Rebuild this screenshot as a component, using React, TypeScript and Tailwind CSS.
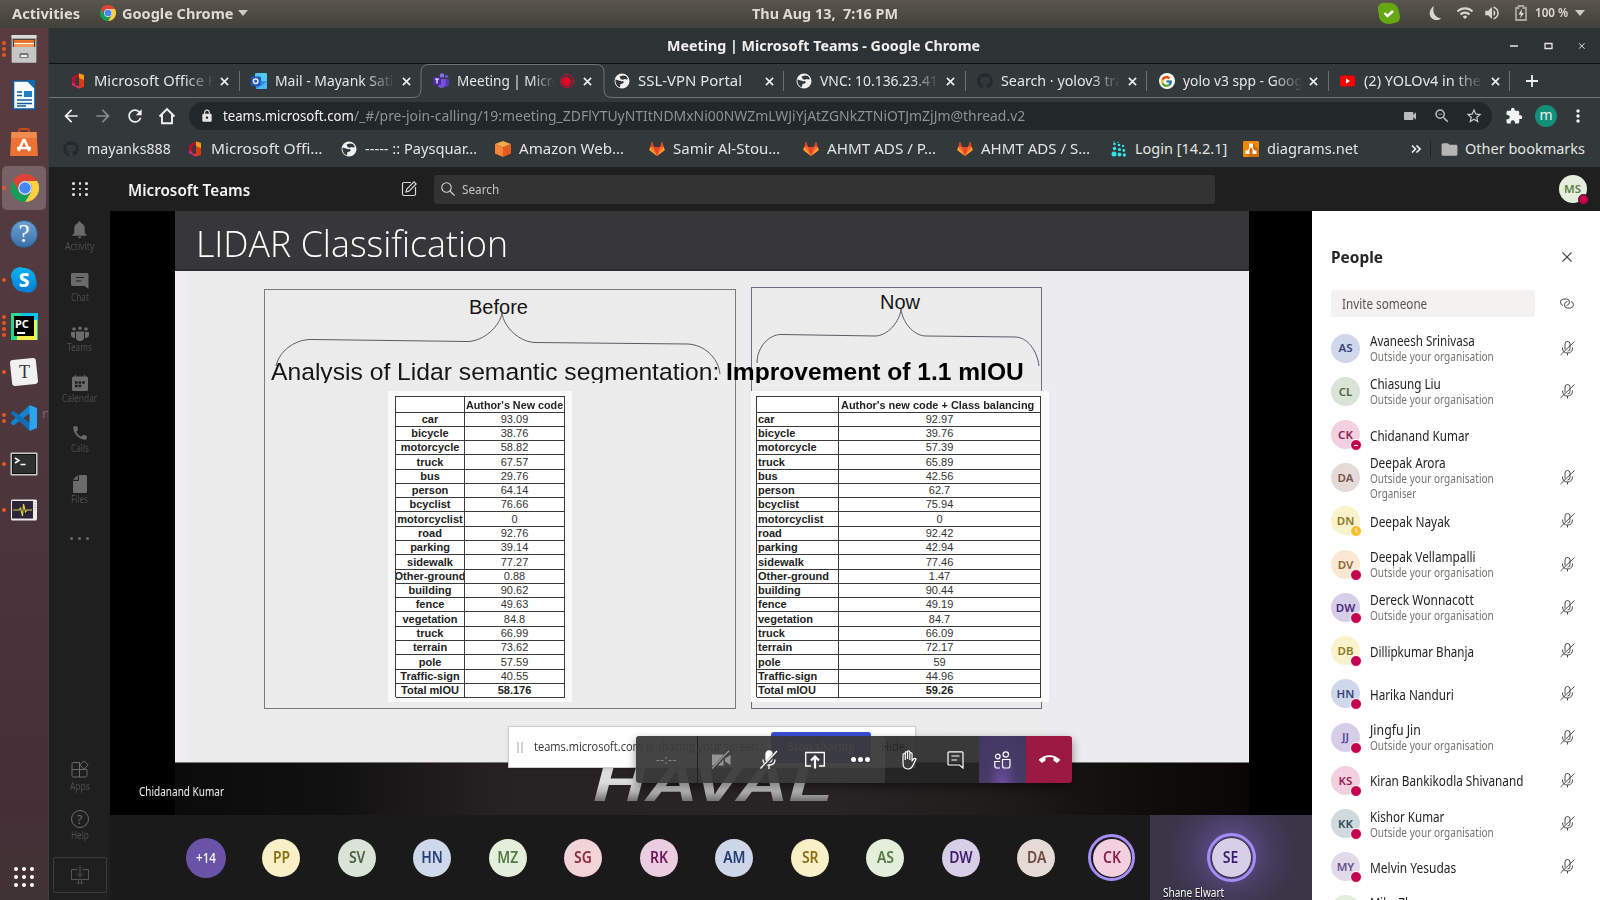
import { useLayoutEffect, useRef, useState } from "react";
import type { ReactNode } from "react";
import { FaGithub } from "react-icons/fa";
import { FcGoogle } from "react-icons/fc";
import {
  MdVideocam, MdExtension, MdMoreVert, MdFolder, MdNotifications, MdCall, MdLock, MdRefresh,
  MdArrowBack, MdArrowForward, MdZoomOut, MdStarBorder, MdWifi, MdVolumeUp, MdCallEnd,
} from "react-icons/md";

/* Text condensed or widened to an exact advance width. */
function Fit({ w, className = "", children }: { w: number; className?: string; children: ReactNode }) {
  const ref = useRef<HTMLSpanElement>(null);
  const [s, setS] = useState(1);
  useLayoutEffect(() => {
    if (ref.current && ref.current.offsetWidth) setS(w / ref.current.offsetWidth);
  }, [w]);
  return (
    <span className="block shrink-0 whitespace-nowrap" style={{ width: w }}>
      <span ref={ref} className={"inline-block origin-left align-top " + className} style={{ transform: `scaleX(${s})` }}>
        {children}
      </span>
    </span>
  );
}

/* ---------- logos ---------- */
const Chrome = ({ className }: { className: string }) => (
  <svg viewBox="0 0 24 24" className={className}>
    <path d="M1.6 6A12 12 0 0 1 22.4 6H12A6 6 0 0 0 6.8 15Z" fill="#dd4436" />
    <path d="M22.4 6A12 12 0 0 1 12 24L17.2 15A6 6 0 0 0 12 6Z" fill="#fdd03f" />
    <path d="M12 24A12 12 0 0 1 1.6 6L6.8 15A6 6 0 0 0 17.2 15Z" fill="#149e58" />
    <circle cx="12" cy="12" r="5.9" fill="#e9edf5" />
    <circle cx="12" cy="12" r="4.9" fill="#4487f4" />
  </svg>
);
const Office = () => (
  <svg viewBox="0 0 16 16" className="size-4 shrink-0">
    <path d="M2 4 9 .5V4L5.5 5v6L3 12.5 2 12Z" fill="#b5122c" />
    <path d="M9 .5 14 2v12l-5 1.5L3.5 12.5 9 13Z" fill="#d93a12" />
    <path d="M9 .5 14 2v5L9 5Z" fill="#f19a1c" />
    <path d="M2 10v2l7 3.500V13l-4.500-.5L5.500 11Z" fill="#e8257f" />
  </svg>
);
const Outlook = () => (
  <svg viewBox="0 0 16 16" className="size-4 shrink-0">
    <rect x="4" y="0" width="12" height="9" rx="1" fill="#50c8f5" />
    <rect x="4" y="4" width="6" height="6" fill="#1066b5" />
    <path d="M4 7.500l12 1V15a1 1 0 0 1-1 1H5Z" fill="#2a8ae0" />
    <path d="M16 8.500 5 16h10a1 1 0 0 0 1-1Z" fill="#4fb5ee" />
    <rect x="0" y="3.500" width="9.500" height="9.500" rx="1" fill="#2157b8" />
    <circle cx="4.700" cy="8.200" r="2.300" fill="none" stroke="#fff" strokeWidth="1.300" />
  </svg>
);
const TeamsLogo = () => (
  <svg viewBox="0 0 16 16" className="size-4 shrink-0">
    <circle cx="13.500" cy="3.500" r="1.700" fill="#5059c9" />
    <circle cx="9" cy="2.500" r="2.300" fill="#8b6be8" />
    <path d="M11 6h5v5a3 3 0 0 1-5 2Z" fill="#5b3bb5" />
    <path d="M5 6h7.500v5.500a4 4 0 0 1-7.500 1.500Z" fill="#7b50d8" />
    <rect x="0" y="4" width="8" height="8" rx=".8" fill="#4b2ba8" />
    <path d="M2 6h4M4 6v4.500" stroke="#fff" strokeWidth="1.200" />
  </svg>
);
const Globe = () => (
  <svg viewBox="0 0 16 16" className="size-4 shrink-0">
    <circle cx="8" cy="8" r="7.500" fill="#f1f1ef" />
    <path d="M1.500 6.500 5 7.500c1.500.4 2 1 3.500.5l1.500 1-1.200 1.500-2.300.5-.6 3.300C3 13.500 1 10 1.500 6.500Z" fill="#33383b" />
    <path d="M5.500 3.500 9 2.500l3 .5 2 3-1.500.5-2-.5-1.500.8-2.200-.6Z" fill="#33383b" />
  </svg>
);
const Github = () => <FaGithub className="size-4 shrink-0 text-[#24292e]" />;
const GoogleG = () => (
  <span className="flex size-4 shrink-0 items-center justify-center rounded-full bg-white"><FcGoogle className="size-[13px]" /></span>
);
const YouTube = () => (
  <svg viewBox="0 0 16 16" className="size-4 shrink-0"><rect x="0" y="2.500" width="15" height="11" rx="2.500" fill="#f00" /><path d="M6 5.500v5L10 8Z" fill="#fff" /></svg>
);
const Fox = () => (
  <svg viewBox="0 0 16 16" className="size-4 shrink-0">
    <path d="M3 .8 5 6h6l2-5.200L15.700 9 8 15 .3 9Z" fill="#fc6d26" />
    <path d="M3 .8 5 6H1.300ZM13 .8 11 6h3.700ZM5 6h6l-3 9Z" fill="#e2432a" />
    <path d="M1.300 6 .3 9 8 15ZM14.700 6l1 3L8 15Z" fill="#fca326" />
  </svg>
);
const Cube = () => (
  <svg viewBox="0 0 16 16" className="size-4 shrink-0">
    <path d="M8 0 16 3 8 6.500 0 3Z" fill="#f9a64a" /><path d="M0 3 8 6.500V16L0 12.500Z" fill="#f58536" /><path d="M16 3 8 6.500V16l8-3.500Z" fill="#e8591f" />
  </svg>
);
const DotsLogo = () => (
  <svg viewBox="0 0 16 16" className="size-4 shrink-0" fill="#2ee6ea">
    <circle cx="3" cy="13" r="2.500" /><circle cx="8.500" cy="13.500" r="1.900" /><circle cx="13.300" cy="14" r="1.700" />
    <circle cx="3.500" cy="7.500" r="1.700" /><circle cx="8.500" cy="8.500" r="1.600" /><circle cx="12.800" cy="9.500" r="1.400" />
    <circle cx="3.500" cy="3" r="1.300" /><circle cx="8" cy="4" r="1.300" /><circle cx="12" cy="5" r="1.200" /><circle cx="3" cy=".9" r=".7" /><circle cx="7" cy="1.200" r=".7" />
  </svg>
);
const Diagrams = () => (
  <svg viewBox="0 0 16 16" className="size-4 shrink-0">
    <rect width="16" height="16" rx="1" fill="#f08705" /><path d="M10 2.500 16 9v7H7l-4.500-3Z" fill="#cf6d06" />
    <path d="M8 5 4.500 11M8 5l3.500 6" stroke="#fff" strokeWidth="1.200" /><path d="M6 2.500h4V6H6ZM2.500 9.500h4V13h-4ZM9.500 9.500h4V13h-4Z" fill="#fff" />
  </svg>
);
const CloseX = () => (
  <svg viewBox="0 0 10 10" className="size-[9px]"><path d="M1 1l8 8M9 1 1 9" stroke="#eceff0" strokeWidth="1.800" /></svg>
);

/* ---------- desktop top bar ---------- */
function TopBar() {
  return (
    <div className="flex h-7 shrink-0 items-center bg-gradient-to-b from-[#5a564d] to-[#42403a] pb-0.5 pl-3 text-[14px] font-bold text-[#dfdbd2]">
      <Fit w={68}>Activities</Fit>
      <Chrome className="ml-5 size-4" />
      <div className="ml-[6px]"><Fit w={111}>Google Chrome</Fit></div>
      <svg viewBox="0 0 10 6" className="ml-[5px] h-[6px] w-[10px]"><path d="M0 0h10L5 6Z" fill="#cfccc4" /></svg>
      <div className="ml-[504px]"><Fit w={146}>Thu Aug 13,&nbsp; 7:16 PM</Fit></div>
      <svg viewBox="0 0 22 22" className="ml-[480px] size-[22px]">
        <path d="M0 7C0 1 5 0 9 1c7-1 12 4 12 9 2 6 1 11-5 11C8 24 0 20 1 12 0 10 0 9 0 7Z" fill="#65a812" />
        <path d="M6.500 11l3 3 5.500-5" fill="none" stroke="#fff" strokeWidth="2.400" />
      </svg>
      <svg viewBox="0 0 14 14" className="ml-[29px] size-[14px]"><path d="M5 0C-1 4-1 12 6 14c3 .5 5-.5 6-2C6 12 3 6 5 0Z" fill="#d8d5cd" /></svg>
      <MdWifi className="ml-[13px] size-[18px] text-[#d8d5cd]" />
      <MdVolumeUp className="ml-[9px] size-[18px] text-[#d8d5cd]" />
      <svg viewBox="0 0 12 16" className="ml-[14px] h-4 w-3"><path d="M1 3h2.500V1h5v2H11v12H1Z" fill="none" stroke="#a9a69e" strokeWidth="1.800" /><path d="M7 4 3.500 9.500H6L5 13.500 9 8H6.500Z" fill="#e5e2da" /></svg>
      <div className="ml-2"><Fit w={33} className="text-[13px] font-semibold">100 %</Fit></div>
      <svg viewBox="0 0 10 6" className="ml-[7px] h-[6px] w-[10px]"><path d="M0 0h10L5 6Z" fill="#cfccc4" /></svg>
    </div>
  );
}

/* ---------- launcher ---------- */
const launcher: { dots: number; y: string; icon: ReactNode }[] = [
  { dots: 3, y: "h-[46px]", icon: (
    <svg viewBox="0 0 28 28" className="size-7"><rect x="1.500" y="0" width="25" height="28" rx="1.500" fill="#a8a8a8" /><rect x="1.500" y="0" width="25" height="3" fill="#d9d9d9" /><rect x="3" y="4" width="22" height="8" fill="#4a4238" /><rect x="4" y="5" width="20" height="3" fill="#e8742e" /><rect x="4" y="8" width="20" height="1" fill="#fff" /><rect x="4" y="9" width="20" height="3" fill="#ef9a55" /><rect x="2" y="12" width="24" height="15" fill="#c6c6c6" /><rect x="9.500" y="18" width="9" height="5" rx="1" fill="#777" /><rect x="11" y="20" width="6" height="2" fill="#eee" /></svg>) },
  { dots: 0, y: "h-[46px]", icon: (
    <svg viewBox="0 0 28 30" className="h-[30px] w-7"><path d="M3.500 1H18l7 7v21H3.500Z" fill="#fafafa" stroke="#0b5a9c" strokeWidth="1.600" /><path d="M17 0h8v9Z" fill="#0d6ab5" /><path d="M7 12h5M7 15.500h5M7 20h15M7 23.500h15M7 26h9" stroke="#0d5f9f" strokeWidth="1.600" /><rect x="14" y="11" width="8" height="6" fill="#1d7fc4" /></svg>) },
  { dots: 0, y: "h-[48px]", icon: (
    <svg viewBox="0 0 28 28" className="size-7"><path d="M9 5V3q0-2 2-2h6q2 0 2 2v2" fill="none" stroke="#c9491c" strokeWidth="2" /><path d="M1.500 4h25L28 28H0Z" fill="#ec7134" /><path d="M1.500 4h25l.3 6H1.200Z" fill="#f08a50" /><path d="M14 11l5.500 12M14 11 8.500 23M7 20h14" stroke="#fff" strokeWidth="2.600" /></svg>) },
  { dots: 1, y: "h-[44px]", icon: <Chrome className="size-7" /> },
  { dots: 0, y: "h-[47px]", icon: (
    <div className="flex size-7 items-center justify-center rounded-full border border-[#2d5a8c] bg-gradient-to-b from-[#6f9fd0] to-[#3a70ab] font-['Liberation_Serif',serif] text-[25px] leading-none text-white">?</div>) },
  { dots: 1, y: "h-[46px]", icon: (
    <div className="relative size-[26px]">
      <span className="absolute left-0 top-0 size-[18px] rounded-full bg-[#08a9ec]" />
      <span className="absolute bottom-0 right-0 size-[18px] rounded-full bg-[#0b7cd4]" />
      <div className="absolute inset-px flex items-center justify-center rounded-full bg-gradient-to-b from-[#08b4f2] to-[#0b7cd4] text-[19px] font-extrabold leading-none text-white">S</div>
    </div>) },
  { dots: 4, y: "h-[46px]", icon: (
    <div className="flex size-[27px] items-center justify-center bg-[linear-gradient(60deg,#21d789_20%,#35dca0_55%,#0ac4ee_60%,#0ac4ee_100%)]"><div className="flex h-5 w-5 flex-col bg-black pl-px pt-px text-[11px] font-bold leading-[13px] text-white shadow-[3px_4px_0_#f4ee4a]">PC<span className="ml-0.5 mt-0.5 h-[1.500px] w-[8px] bg-white" /></div></div>) },
  { dots: 1, y: "h-[46px]", icon: (
    <div className="flex size-[26px] -rotate-6 items-center justify-center rounded-[3px] bg-[#f1f1f1]"><span className="rotate-6 font-['Liberation_Serif',serif] text-[18px] leading-none text-[#333]">T</span></div>) },
  { dots: 2, y: "h-[46px]", icon: (
    <svg viewBox="0 0 28 28" className="size-7"><path d="M20 1 2 17l-1.500 2 3 2.500L20 9Z" fill="#1484cf" /><path d="M3.500 7 .5 9 20 27V19Z" fill="#0f70b8" /><path d="M19.500 1 27 4v20l-7.500 3Z" fill="#2ba3ee" /></svg>) },
  { dots: 1, y: "h-[46px]", icon: (
    <svg viewBox="0 0 28 24" className="h-6 w-7"><rect x=".5" y=".5" width="27" height="23" rx="1" fill="#c9c9c6" /><rect x="2.500" y="2.500" width="23" height="19" fill="#2c302f" stroke="#111" /><path d="M5 6l4 2.500L5 11M10.500 12.500h5" fill="none" stroke="#fff" strokeWidth="1.500" /></svg>) },
  { dots: 1, y: "h-[46px]", icon: (
    <svg viewBox="0 0 28 22" className="h-[22px] w-7"><rect x="1" y=".5" width="26" height="21" rx="1.500" fill="#ecebe8" /><rect x="2" y="2" width="21" height="17.500" fill="#2a2539" /><path d="M3 11h6l1.500-2 2 8L13.500 5l2 8 1.500-2h5" fill="none" stroke="#d9cf4a" strokeWidth="1.100" /><path d="M25 3v8" stroke="#888" strokeDasharray="1 1.500" /></svg>) },
];
function Launcher() {
  return (
    <div className="flex w-[49px] shrink-0 flex-col border-r border-[#3a3f38] bg-[linear-gradient(#5a3c3f,#50393e_35%,#49343b_65%,#452f37_90%,#403334)] pr-0.5">
      {launcher.map((l, i) => (
        <div key={i} className={"relative flex shrink-0 items-center justify-center " + l.y + (i === 0 ? " -mt-0.5" : "") + (i === 3 ? " ml-0.5 rounded-[5px] bg-white/20" : "")}>
          <div className={"absolute flex flex-col gap-[2px] " + (i === 3 ? "left-0" : "left-0.5")}>
            {Array.from({ length: l.dots }, (_, k) => <span key={k} className="size-1 rounded-full bg-[#e95420]" />)}
          </div>
          <div className="pl-0.5">{l.icon}</div>
          {i === 8 && <span className="absolute -right-0.5 top-2.5 w-1.5 overflow-hidden text-[13px] leading-4 text-[#77696c]">n</span>}
        </div>
      ))}
      <div className="mt-auto grid grid-cols-[repeat(3,4px)] gap-[4px] pb-[13px] pl-[14px]">
        {Array.from({ length: 9 }, (_, k) => <span key={k} className="size-1 rounded-full bg-white" />)}
      </div>
    </div>
  );
}

/* ---------- browser ---------- */
const tabs: { icon: ReactNode; t: string; w: number; fade?: boolean; rec?: boolean; sep?: boolean }[] = [
  { icon: <Office />, t: "Microsoft Office H", w: 125, fade: true, sep: true },
  { icon: <Outlook />, t: "Mail - Mayank Sati", w: 118, fade: true },
  { icon: <TeamsLogo />, t: "Meeting | Micro", w: 103, fade: true, rec: true },
  { icon: <Globe />, t: "SSL-VPN Portal", w: 104, sep: true },
  { icon: <Globe />, t: "VNC: 10.136.23.41", w: 118, fade: true, sep: true },
  { icon: <Github />, t: "Search · yolov3 tra", w: 122, fade: true, sep: true },
  { icon: <GoogleG />, t: "yolo v3 spp - Goog", w: 120, fade: true, sep: true },
  { icon: <YouTube />, t: "(2) YOLOv4 in the", w: 117, fade: true, sep: true },
];
function Tabs() {
  return (
    <div className="relative flex h-[34px] shrink-0 bg-[#33383b] pl-[9px]">
      <svg className="absolute inset-0 h-[34px] w-[1551px]" viewBox="0 0 1551 34" fill="none">
        <path d="M0 33.500H364q8 0 8-8V8.500q0-8 8-8H547q8 0 8 8v17q0 8 8 8H1551" stroke="#6d7477" />
      </svg>
      {tabs.map((x, i) => (
        <div key={i} className="relative flex w-[181.500px] items-center pl-[11.500px]">
          {x.icon}
          <div className={"ml-2 overflow-hidden text-[14.500px] text-[#e4e6e6] " + (x.rec ? "w-[97px]" : "w-[118px]") + (x.fade ? " [mask-image:linear-gradient(to_right,#000_76%,transparent_102%)]" : "")}>
            <Fit w={x.w}>{x.t}</Fit>
          </div>
          {x.rec && <span className="ml-[6px] mr-px flex size-[14px] items-center justify-center rounded-full border border-[#e8002a] p-[2px]"><span className="size-[9px] shrink-0 rounded-full bg-[#e8002a]" /></span>}
          <div className="flex w-[26px] justify-center"><CloseX /></div>
          {x.sep && <div className="ml-auto h-5 w-px bg-[#6a7073]" />}
        </div>
      ))}
      <svg viewBox="0 0 12 12" className="ml-[16px] mt-[11px] size-3"><path d="M6 0v12M0 6h12" stroke="#f0f0f0" strokeWidth="1.800" /></svg>
    </div>
  );
}
function AddressBar() {
  return (
    <div className="flex h-9 shrink-0 items-center bg-[#33383b] pl-3 text-[#f2f2f0]">
      <MdArrowBack className="size-5" />
      <MdArrowForward className="ml-3 size-5 text-[#878b8d]" />
      <MdRefresh className="ml-3 size-5" />
      <svg viewBox="0 0 18 18" className="ml-[13px] size-[18px]"><path d="M1.500 9.500 9 2l7.500 7.500M4 8v8.200h10V8" fill="none" stroke="currentColor" strokeWidth="1.900" /></svg>
      <div className="ml-[13px] flex h-7 w-[1303px] items-center rounded-full bg-[#22272a] pl-[11px]">
        <MdLock className="size-[14px] text-[#e4e4e2]" />
        <div className="ml-[9px] text-[14.500px]"><Fit w={131}>teams.microsoft.com</Fit></div>
        <div className="text-[14.500px] text-[#8d9294]"><Fit w={671}>/_#/pre-join-calling/19:meeting_ZDFlYTUyNTItNDMxNi00NWZmLWJiYjAtZGNkZTNiOTJmZjJm@thread.v2</Fit></div>
        <MdVideocam className="ml-auto size-4 text-[#b9bcbd]" />
        <MdZoomOut className="ml-[15px] size-[18px] text-[#b9bcbd]" />
        <MdStarBorder className="ml-[14px] mr-[9px] size-[18px] text-[#c9cccd]" />
      </div>
      <MdExtension className="ml-[13px] size-[18px]" />
      <div className="ml-3 flex size-[22px] items-center justify-center rounded-full bg-[#12907c] pb-0.5 text-[14px] leading-none">m</div>
      <MdMoreVert className="ml-[11px] size-5" />
    </div>
  );
}
const bookmarks: [ReactNode, string, number][] = [
  [<Github />, "mayanks888", 84], [<Office />, "Microsoft Offi…", 112], [<Globe />, "----- :: Paysquar…", 112], [<Cube />, "Amazon Web…", 105],
  [<Fox />, "Samir Al-Stou…", 107], [<Fox />, "AHMT ADS / P…", 109], [<Fox />, "AHMT ADS / S…", 109], [<DotsLogo />, "Login [14.2.1]", 92], [<Diagrams />, "diagrams.net", 91],
];
function Bookmarks() {
  return (
    <div className="flex h-[33px] shrink-0 items-center bg-[#33383b] pb-[3px] text-[#e2e4e4]">
      <div className="grid w-[1359px] grid-cols-[124px_154px_154px_154px_154px_154px_154px_132px_120px] pl-[14px] text-[14.500px]">
        {bookmarks.map(([icon, t, w], i) => (
          <div key={i} className="flex items-center gap-2">{icon}<Fit w={w}>{t}</Fit></div>
        ))}
      </div>
      <svg viewBox="0 0 10 8" className="ml-[3px] h-2 w-[10px]"><path d="M1 .5 4.500 4 1 7.500M5.500 .5 9 4 5.500 7.500" fill="none" stroke="#eee" strokeWidth="1.600" /></svg>
      <div className="ml-[9px] h-4 w-px bg-[#1d2123]" />
      <MdFolder className="ml-[9px] size-[19px] text-[#b5b5b3]" />
      <div className="ml-[6px] text-[14.500px]"><Fit w={120}>Other bookmarks</Fit></div>
    </div>
  );
}

/* ---------- Teams ---------- */
function TeamsHeader() {
  return (
    <div className="flex h-[44px] shrink-0 items-center bg-[#1f1f1f]">
      <div className="ml-[23px] grid grid-cols-3 gap-x-[4px] gap-y-[3px]">
        {Array.from({ length: 9 }, (_, k) => <span key={k} className="size-[2.500px] rounded-full bg-[#e8e8e8]" />)}
      </div>
      <div className="ml-[40px] pt-[3px] text-[15.500px] font-semibold text-[#f3f3f3]"><Fit w={122}>Microsoft Teams</Fit></div>
      <svg viewBox="0 0 16 16" className="ml-[151px] size-4" fill="none" stroke="#d5d5d5" strokeWidth="1.200"><path d="M10 1.500H3A1.500 1.500 0 0 0 1.500 3v10A1.500 1.500 0 0 0 3 14.500h10a1.500 1.500 0 0 0 1.500-1.500V6" /><path d="M5 11l.8-3L13 .9l2.100 2.100L8 10.200Z" /></svg>
      <div className="ml-[17px] flex h-[29px] w-[781px] items-center rounded-[3px] bg-[#333] pl-[7px]">
        <svg viewBox="0 0 14 14" className="size-[14px]" fill="none" stroke="#d5d5d5" strokeWidth="1.100"><circle cx="5.500" cy="5.500" r="4.700" /><path d="M9 9l4.500 4.500" /></svg>
        <div className="ml-[7px] pt-[2px] text-[13px] text-[#c4c4c4]"><Fit w={37}>Search</Fit></div>
      </div>
      <div className="relative ml-[344px] flex size-7 items-center justify-center rounded-full bg-[#e4eedb] text-[11.500px] font-semibold text-[#5c8048]">
        MS<span className="absolute -bottom-0.5 -right-0.5 size-[11px] rounded-full border border-[#1f1f1f] bg-[#c4014e]" />
      </div>
    </div>
  );
}
const rail: [string, number, ReactNode][] = [
  ["Activity", 29, <MdNotifications className="size-[21px]" />],
  ["Chat", 18, <svg viewBox="0 0 18 17" className="mt-1 h-[17px] w-[18px]"><path d="M1 0h15q1.500 0 1.500 1.500V16L13.500 13H1.500Q0 13 0 11.500V1Z" fill="currentColor" /><path d="M5 4.500h8M5 8h5.500" stroke="#1f1f1f" /></svg>],
  ["Teams", 25, <svg viewBox="0 0 18 15" className="mt-1.5 h-[15px] w-[18px]" fill="currentColor"><circle cx="3" cy="3" r="1.800" /><circle cx="9" cy="2.200" r="1.800" /><circle cx="15" cy="3" r="1.800" /><path d="M0 6h4v6q-4 0-4-3ZM14 6h4v3q0 3-4 3ZM5 5.500h8v6q0 3.500-4 3.500t-4-3.500Z" /></svg>],
  ["Calendar", 35, <svg viewBox="0 0 16 16" className="mt-1 size-4"><path d="M2 1.500h1V0h1v1.500h8V0h1v1.500h1.500Q16 1.500 16 3v11.500q0 1.500-1.500 1.500h-13Q0 16 0 14.500V3Q0 1.500 1.500 1.500Z" fill="currentColor" /><path d="M3 7.500h10M3 11h7" stroke="#1f1f1f" strokeWidth="2.600" strokeDasharray="2.600 1" /></svg>],
  ["Calls", 18, <MdCall className="mt-1 size-[18px]" />],
  ["Files", 17, <svg viewBox="0 0 14 18" className="mt-1 h-[18px] w-[14px]" fill="currentColor"><path d="M6 0h6.500Q14 0 14 1.500v15Q14 18 12.500 18h-11Q0 18 0 16.500V6h5q1 0 1-1ZM0 4.800 4.800 0v4.800Z" /></svg>],
];
function Rail() {
  return (
    <div className="flex w-[61px] shrink-0 flex-col items-center bg-[#1f1f1f] pt-[7px] text-[#6b6b6b]">
      {rail.map(([t, w, icon]) => (
        <div key={t} className="flex h-[50.500px] shrink-0 flex-col items-center">
          <div className="flex h-[22px] items-center">{icon}</div>
          <div className="text-[10.500px] leading-[13px] text-[#4d4d4d]"><Fit w={w}>{t}</Fit></div>
        </div>
      ))}
      <div className="mt-[16px] flex gap-[5px]"><span className="size-[3px] rounded-full bg-current" /><span className="size-[3px] rounded-full bg-current" /><span className="size-[3px] rounded-full bg-current" /></div>
      <div className="mt-auto flex h-[50px] flex-col items-center">
        <svg viewBox="0 0 18 18" className="mb-[2px] size-[18px]" fill="none" stroke="currentColor"><path d="M1 9.500h7.500V17H2.500Q1 17 1 15.500ZM8.500 9.500H16v6q0 1.500-1.500 1.500h-6ZM1 9.500V4q0-1.500 1.500-1.500h6v7M13 .8l4.200 4.200L13 9.200 8.800 5Z" /></svg>
        <div className="text-[10.500px] leading-[13px] text-[#4d4d4d]"><Fit w={20}>Apps</Fit></div>
      </div>
      <div className="flex h-[47px] flex-col items-center">
        <div className="mb-px flex size-[18px] items-center justify-center rounded-full border border-current text-[13px] leading-none">?</div>
        <div className="text-[10.500px] leading-[13px] text-[#4d4d4d]"><Fit w={18}>Help</Fit></div>
      </div>
      <div className="mb-[7px] flex h-[36px] w-[54px] items-center justify-center rounded-[2px] border border-[#3c3c3c] text-[#555]">
        <svg viewBox="0 0 18 18" className="size-[18px]" fill="none" stroke="currentColor"><path d="M6.500 3.500H.5v10h17v-10h-6M9 0v10.500M6 7.500l3 3 3-3M7.500 13.500v3M10.500 13.500v3M5.500 17h7" /></svg>
      </div>
    </div>
  );
}

const labels = ["car", "bicycle", "motorcycle", "truck", "bus", "person", "bcyclist", "motorcyclist", "road", "parking", "sidewalk", "Other-ground", "building", "fence", "vegetation", "truck", "terrain", "pole", "Traffic-sign", "Total mIOU"];
const before = ["93.09", "38.76", "58.82", "67.57", "29.76", "64.14", "76.66", "0", "92.76", "39.14", "77.27", "0.88", "90.62", "49.63", "84.8", "66.99", "73.62", "57.59", "40.55", "58.176"];
const now = ["92.97", "39.76", "57.39", "65.89", "42.56", "62.7", "75.94", "0", "92.42", "42.94", "77.46", "1.47", "90.44", "49.19", "84.7", "66.09", "72.17", "59", "44.96", "59.26"];

function ScoreTable({ head, headW, values, cols, labelClass, headClass }: { head: string; headW: number; values: string[]; cols: string; labelClass: string; headClass: string }) {
  return (
    <div className="border-l border-t border-[#3a3a3c] bg-white text-[11px] leading-[13px] text-[#222]">
      {["", ...labels].map((l, i) => (
        <div key={i} className={"grid h-[14.290px] " + cols}>
          <div className={"flex items-center overflow-hidden whitespace-nowrap border-b border-r border-[#3a3a3c] pt-[1.500px] font-bold " + labelClass}>{l}</div>
          <div className={"flex items-center justify-center border-b border-r border-[#3a3a3c] pt-[1.500px] " + (i === 0 ? "font-bold " + headClass : i === 20 ? "font-bold" : "text-[#333]")}>
            {i === 0 ? <Fit w={headW}>{head}</Fit> : values[i - 1]}
          </div>
        </div>
      ))}
    </div>
  );
}

function Slide() {
  return (
    <div className="relative z-10 h-[551px] w-[1074px] bg-[linear-gradient(90deg,#efedf1_0,#efedf1_12px,#ebebeb_13px,#ececec_70%,#ecebf0)] font-['Liberation_Sans',Arial,sans-serif] text-[#161616]">
      <div className="flex h-[60px] items-center border-b-2 border-[#2c2c2e] bg-[#373739] pl-[21px] pt-2 font-['Open_Sans',sans-serif] text-[36px] font-light leading-none text-white">
        <Fit w={312}>LIDAR Classification</Fit>
      </div>
      <div className="absolute left-[89px] top-[78px] h-[420px] w-[472px] border border-[#7c7c80]" />
      <div className="absolute left-[576px] top-[76px] h-[422px] w-[291px] border border-[#706c80]" />
      <div className="absolute left-[294px] top-[81px] text-[20px]"><Fit w={59}>Before</Fit></div>
      <div className="absolute left-[705px] top-[76px] text-[20px]"><Fit w={40}>Now</Fit></div>
      <svg viewBox="175 211 1074 551" className="absolute inset-0 h-[551px] w-[1074px]" fill="none" stroke="#5c5a66" strokeWidth="1">
        <path d="M276 366C280 349 297 339 312 339.500L468 341.500C484 341 500 326 502 313C504 328 520 342 535 342.500L688 344C704 345 718 357 720 374" />
        <path d="M757 363C757 347 769 334.500 781 334.500L875 336C888 336 900 321 901 309C902 321 913 336 926 336L1015 337C1027 337 1037 350 1039 366" />
      </svg>
      <div className="absolute left-[96px] top-[145px] flex h-[27px] overflow-hidden text-[24.500px] leading-[31px]">
        <Fit w={448}>Analysis of Lidar semantic segmentation:</Fit>
        <div className="ml-[7px] font-bold text-black"><Fit w={298}>Improvement of 1.1 mIOU</Fit></div>
      </div>
      <div className="absolute left-[213px] top-[180px] bg-[#fafafa] px-[7px] py-[5px]">
        <ScoreTable head="Author's New code" headW={97} values={before} cols="grid-cols-[69px_100px]" labelClass="justify-center" headClass="" />
      </div>
      <div className="absolute left-[576px] top-[180px] bg-[#fafafa] py-[5px] pl-[5px] pr-2">
        <ScoreTable head="Author's new code + Class balancing" headW={193} values={now} cols="grid-cols-[82px_202px]" labelClass="pl-px" headClass="pr-1" />
      </div>
      <div className="absolute left-[333px] top-[515px] flex h-[42px] w-[408px] items-center border border-[#cfcbd4] bg-white pl-2 font-['Open_Sans',sans-serif] text-[13px] text-[#333] shadow">
        <span className="h-[11px] w-[6px] border-x-2 border-[#d5d3d8]" />
        <div className="ml-[11px]"><Fit w={227}>teams.microsoft.com is sharing your screen.</Fit></div>
        <div className="ml-[10px] flex h-[31px] w-[100px] items-center justify-center rounded-[3px] bg-[#3a4fd8] text-white"><Fit w={67} className="font-semibold">Stop sharing</Fit></div>
        <div className="ml-[10px]"><Fit w={24}>Hide</Fit></div>
      </div>
    </div>
  );
}

function Controls() {
  return (
    <div className="absolute left-[526px] top-[525px] z-20 flex h-[47px] w-[436px] overflow-hidden rounded-[3px] text-white shadow-[0_4px_10px_rgba(0,0,0,0.45)]">
      <div className="flex w-[249px] items-center bg-[#3a3a3a]/95">
        <div className="flex h-full w-[61.500px] items-center justify-center border-r border-[#222] text-[12px] tracking-[0.5px] text-[#858585]">--:--</div>
        <div className="flex w-[47px] justify-center">
          <svg viewBox="0 0 20 20" className="size-5"><path d="M1 4.500h11.500v11H1ZM14 8.500 19.500 5v10L14 11.500Z" fill="#949494" /><path d="M1.500 19 18 1.500" stroke="#3d3d3d" strokeWidth="3" /><path d="M1 18.500 18 .8" stroke="#949494" strokeWidth="1.300" /></svg>
        </div>
        <div className="flex w-[48px] justify-center">
          <svg viewBox="0 0 20 20" className="size-5" fill="none" stroke="#fff" strokeWidth="1.300"><rect x="7" y="1" width="6" height="11" rx="3" fill="#fff" /><path d="M4 9.500c0 3.500 2.500 5.500 6 5.500s6-2 6-5.500M10 15v4" /><path d="M2.500 19 18.500 1" stroke="#3d3d3d" strokeWidth="3.200" /><path d="M1.500 18.500 18 1" /></svg>
        </div>
        <div className="flex w-[45px] justify-center">
          <svg viewBox="0 0 20 20" className="size-5" fill="none" stroke="#fff"><path d="M6 16H.7V2.500h18.600V16H14" strokeWidth="1.300" /><path d="M10 18.500V7M6 10.500l4-4 4 4" strokeWidth="2.200" /></svg>
        </div>
        <div className="flex w-[46px] justify-center gap-[2px]"><span className="size-[5px] rounded-full bg-white" /><span className="size-[5px] rounded-full bg-white" /><span className="size-[5px] rounded-full bg-white" /></div>
      </div>
      <div className="flex w-[94px] items-center bg-[#262626]/90">
        <div className="flex w-[46px] justify-center">
          <svg viewBox="0 0 20 22" className="h-[20px] w-[18px]" fill="none" stroke="#fff" strokeWidth="1.300" strokeLinejoin="round"><path d="M4.500 12V5q0-1.200 1.200-1.200T7 5V3q0-1.200 1.200-1.200T9.500 3V2q0-1.200 1.200-1.200T12 2v2q0-1.200 1.200-1.200T14.500 4v8l2-2.500q1.500-.8 2.500.5L16 16q-2 5-6 5-5.500 0-5.500-6ZM7 5v6M9.500 3v7M12 4v7" /></svg>
        </div>
        <div className="flex w-[48px] justify-center">
          <svg viewBox="0 0 17 18" className="h-[18px] w-[17px]" fill="none" stroke="#fff" strokeWidth="1.200"><path d="M2 .8h13q1 0 1 1V17l-3.500-3H2q-1 0-1-1V1.800q0-1 1-1ZM4.500 5h8M4.500 9h5.500" /></svg>
        </div>
      </div>
      <div className="flex w-[47px] items-center justify-center bg-[radial-gradient(ellipse_at_50%_100%,#6a4ca0_0,#463b66_45%,#403860_100%)]">
        <svg viewBox="0 0 17 18" className="h-[18px] w-[17px]" fill="none" stroke="#fff" strokeWidth="1.200"><circle cx="3.800" cy="5.500" r="2.300" /><circle cx="11.800" cy="3.500" r="2.700" /><path d="M8.500 8.500h7.500v6q0 2.500-2 2.500h-3.500q-2 0-2-2.500ZM6 10.500H.8v4q0 2.500 2 2.500H6" /></svg>
      </div>
      <div className="flex flex-1 items-center justify-center bg-[#9b1a42]"><MdCallEnd className="size-[21px]" /></div>
    </div>
  );
}

const strip: [string, string][] = [
  ["PP", "bg-[#faf0c8] text-[#8a6f14]"], ["SV", "bg-[#dae3d8] text-[#4b6344]"], ["HN", "bg-[#cfd9ea] text-[#27407a]"], ["MZ", "bg-[#e3eedb] text-[#527a42]"],
  ["SG", "bg-[#f2d3d8] text-[#8c2b3c]"], ["RK", "bg-[#ebcde0] text-[#6d1459]"], ["AM", "bg-[#cdd7e9] text-[#243a72]"], ["SR", "bg-[#faf0c8] text-[#8a6f14]"],
  ["AS", "bg-[#e3eedb] text-[#527a42]"], ["DW", "bg-[#d7cfe8] text-[#3c1c70]"], ["DA", "bg-[#e5dad6] text-[#6e4a40]"],
];
function Strip() {
  return (
    <div className="flex h-[85px] shrink-0 bg-[#1a1a1a] text-[15.500px] font-semibold">
      <div className="flex w-[1040px] items-center pl-[58px]">
        <div className="flex w-[75.500px] justify-center"><div className="flex size-10 items-center justify-center rounded-full bg-[#6953a6] text-[14px] font-medium text-white"><Fit w={20}>+14</Fit></div></div>
        {strip.map(([t, c], i) => (
          <div key={i} className="flex w-[75.500px] justify-center"><div className={"flex size-[38px] items-center justify-center rounded-full " + c}><span className="scale-x-90">{t}</span></div></div>
        ))}
        <div className="flex w-[75.500px] justify-center"><div className="flex size-[47px] items-center justify-center rounded-full border-[3px] border-[#a58df8]"><div className="flex size-[38px] items-center justify-center rounded-full bg-[#f3d0de] text-[#851f50]"><span className="scale-x-90">CK</span></div></div></div>
      </div>
      <div className="relative flex flex-1 justify-center bg-[radial-gradient(circle_at_50%_45%,#65529a_0,#54467a_22px,#443b5b_42px,#3a3547_65px,#393446_100%)] pt-[18px]">
        <div className="flex size-[49px] items-center justify-center rounded-full border-[3px] border-[#a58df8]"><div className="flex size-[41px] items-center justify-center rounded-full border border-[#2e2840] bg-[#d7cfe8] text-[#3c1c70]"><span className="scale-x-90">SE</span></div></div>
        <div className="absolute -bottom-px left-[13px] text-[12px] font-normal leading-[16px] text-white [text-shadow:0_1px_1px_#000]"><Fit w={61}>Shane Elwart</Fit></div>
      </div>
    </div>
  );
}

function Stage() {
  return (
    <div className="flex w-[1202px] shrink-0 flex-col">
      <div className="relative flex h-[604px] shrink-0 flex-col items-start bg-black pl-[65px]">
        <Slide />
        <div className="h-[53px] w-[1074px] overflow-hidden border-t border-[#777] bg-[linear-gradient(90deg,#0b0b0b,#121112_15%,#262122_30%,#292527_60%,#211d1c_75%,#0f0e0b_90%,#0a0606)] pl-[418px]">
          <div className="-mt-[13px] font-['Liberation_Sans',sans-serif] text-[54px] font-bold italic leading-[64px] text-transparent">
            <Fit w={240}><span className="bg-[linear-gradient(#ddd_50%,#bbb_65%,#777_80%)] bg-clip-text">HAVAL</span></Fit>
          </div>
        </div>
        <div className="absolute bottom-[14px] left-[29px] text-[12px] leading-[18px] text-[#f0f0f0]"><Fit w={85}>Chidanand Kumar</Fit></div>
        <Controls />
      </div>
      <Strip />
    </div>
  );
}

const Muted = () => (
  <svg viewBox="0 0 15 15" className="size-[15px]" fill="none" stroke="#4a4a4a" strokeWidth="1"><path d="M5 8.500V3q0-2.500 2.500-2.500T10 3v4.500Q10 10 7.500 10M2.500 6.500q0 5.500 5 5.500t5-5.500M7.500 12v2.500M.5 14 14.500 .5" /></svg>
);
type P = { i: string; c: string; n: string; w: number; out?: boolean; org?: boolean; st?: "busy" | "dnd" | "away"; talk?: boolean };
const people: P[] = [
  { i: "AS", c: "bg-[#cfd8ea] text-[#364679]", n: "Avaneesh Srinivasa", w: 105, out: true },
  { i: "CL", c: "bg-[#dae3d8] text-[#4c6345]", n: "Chiasung Liu", w: 71, out: true },
  { i: "CK", c: "bg-[#f3d0de] text-[#8b2055]", n: "Chidanand Kumar", w: 99.5, st: "dnd", talk: true },
  { i: "DA", c: "bg-[#e5dad7] text-[#77564c]", n: "Deepak Arora", w: 76, out: true, org: true },
  { i: "DN", c: "bg-[#faf2cb] text-[#8c7a26]", n: "Deepak Nayak", w: 80, st: "away" },
  { i: "DV", c: "bg-[#fae8d3] text-[#8c6534]", n: "Deepak Vellampalli", w: 106, out: true, st: "busy" },
  { i: "DW", c: "bg-[#d6cee8] text-[#46267c]", n: "Dereck Wonnacott", w: 104, out: true, st: "busy" },
  { i: "DB", c: "bg-[#faf2cb] text-[#8c7a26]", n: "Dillipkumar Bhanja", w: 104, st: "busy" },
  { i: "HN", c: "bg-[#cfd8ea] text-[#364679]", n: "Harika Nanduri", w: 84, st: "busy" },
  { i: "JJ", c: "bg-[#d6cee8] text-[#57459a]", n: "Jingfu Jin", w: 51, out: true, st: "busy" },
  { i: "KS", c: "bg-[#f3d0de] text-[#96205a]", n: "Kiran Bankikodla Shivanand", w: 153, st: "busy" },
  { i: "KK", c: "bg-[#d0d9de] text-[#2f4c55]", n: "Kishor Kumar", w: 74, out: true, st: "busy" },
  { i: "MY", c: "bg-[#e2daeb] text-[#66518b]", n: "Melvin Yesudas", w: 86, st: "busy" },
  { i: "MZ", c: "bg-[#e3eedb] text-[#527a42]", n: "Mike Zhang", w: 62, out: true },
];
function People() {
  return (
    <div className="flex w-[288px] shrink-0 flex-col overflow-hidden bg-white pl-[19px] text-[#252423]">
      <div className="flex h-[79px] shrink-0 items-center pt-[13px]">
        <div className="text-[16px] font-bold"><Fit w={52}>People</Fit></div>
        <svg viewBox="0 0 10 10" className="ml-[179px] size-[10px]"><path d="M.5 .5l9 9M9.500 .5l-9 9" stroke="#444" strokeWidth="1.100" /></svg>
      </div>
      <div className="flex h-[27px] shrink-0 items-center">
        <div className="flex h-[27px] w-[204px] items-center rounded-[2px] bg-[#f3f2f1] pl-[11px] pt-[2px] text-[13.500px] text-[#55534f]"><Fit w={85}>Invite someone</Fit></div>
        <svg viewBox="0 0 14 11" className="ml-[25px] h-[11px] w-[14px]" fill="none" stroke="#444"><path d="M3 7.500Q.5 7 .5 4.200T3.500 1h3Q9.500 1.200 9.500 4T6.500 7.500M11 3.500q2.500.5 2.500 3.200T10.500 10h-3q-3-.2-3-3.200T7.500 3.500" /></svg>
      </div>
      <div className="flex flex-col pt-[9.500px]">
        {people.map((p) => (
          <div key={p.n} className="flex h-[43.230px] shrink-0 items-center">
            <div className={"relative flex size-[29px] shrink-0 items-center justify-center rounded-full text-[11.500px] font-semibold " + p.c}>
              {p.i}
              {p.st && (
                <span className={"absolute -bottom-0.5 -right-0.5 flex size-[12px] items-center justify-center rounded-full border-[1.500px] border-white " + (p.st === "away" ? "bg-[#f8bd2c]" : "bg-[#c4014e]")}>
                  {p.st === "dnd" && <span className="h-px w-[4px] bg-white" />}
                  {p.st === "away" && <svg viewBox="0 0 8 8" className="size-2"><path d="M4 1.500v3l1.500 1" fill="none" stroke="#fff" /></svg>}
                </span>
              )}
            </div>
            <div className={"ml-[10px] w-[186.500px] " + (p.out ? "mt-px" : "mt-[2px]")}>
              <div className="text-[13.500px] leading-[16px]"><Fit w={p.w}>{p.n}</Fit></div>
              {p.out && <div className="text-[12px] leading-[15px] text-[#76746f]"><Fit w={123.5}>Outside your organisation</Fit></div>}
              {p.org && <div className="text-[12px] leading-[15px] text-[#76746f]"><Fit w={46}>Organiser</Fit></div>}
            </div>
            <div className="ml-[3.500px]">{!p.talk && <Muted />}</div>
          </div>
        ))}
      </div>
    </div>
  );
}

export default function App() {
  return (
    <div className="flex h-[900px] w-[1600px] flex-col overflow-hidden bg-[#1f1f1f] font-['Noto_Sans','Open_Sans',sans-serif]">
      <TopBar />
      <div className="flex min-h-0 flex-1">
        <Launcher />
        <div className="flex min-w-0 flex-1 flex-col">
          <div className="flex h-9 shrink-0 items-center border-b border-[#0e1011] bg-[#2d3235] pl-[618px] text-[14px] font-bold text-[#f0f0ee]">
            <Fit w={313}>Meeting | Microsoft Teams - Google Chrome</Fit>
            <svg viewBox="0 0 80 10" className="ml-[529px] h-[10px] w-[80px]" fill="none" stroke="#e6e6e4"><path d="M1 5h8" strokeWidth="1.500" /><path d="M36 2.500h7v5h-7Z" strokeWidth="1.300" /><path d="M70 2.200l5.500 5.500M75.500 2.200 70 7.700" /></svg>
          </div>
          <Tabs />
          <AddressBar />
          <Bookmarks />
          <TeamsHeader />
          <div className="flex min-h-0 flex-1">
            <Rail />
            <Stage />
            <People />
          </div>
        </div>
      </div>
    </div>
  );
}
